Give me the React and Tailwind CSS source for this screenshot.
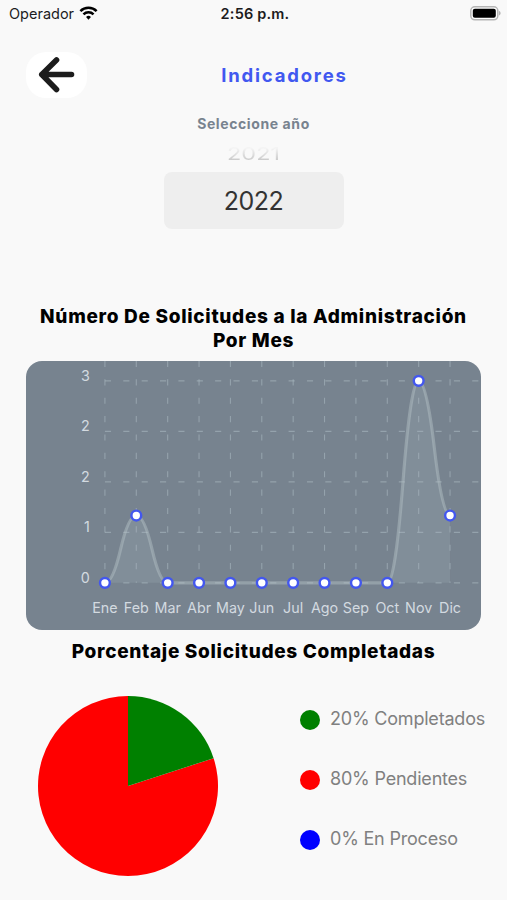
import { useState } from "react";

const months = ["Ene", "Feb", "Mar", "Abr", "May", "Jun", "Jul", "Ago", "Sep", "Oct", "Nov", "Dic"];
const requests = [0, 1, 0, 0, 0, 0, 0, 0, 0, 0, 3, 1];

const statuses = [
  { label: "20% Completados", dot: "bg-[#008000]" },
  { label: "80% Pendientes", dot: "bg-[#ff0000]" },
  { label: "0% En Proceso", dot: "bg-[#0000ff]" },
];

const CHART = { width: 371.5, height: 220, left: 64.4, top: 16.2, bottom: 181.2 };

const getX = (i) => CHART.left + (i * (CHART.width - 64)) / 12;
const getY = (value) => CHART.bottom - (value / 3) * (CHART.bottom - CHART.top);

// Two quadratic curves between every pair of points
const getLinePath = () => {
  let d = `M${getX(0)},${getY(requests[0])}`;
  for (let i = 0; i < requests.length - 1; i++) {
    const x1 = getX(i);
    const x2 = getX(i + 1);
    const y1 = getY(requests[i]);
    const y2 = getY(requests[i + 1]);
    const midX = (x1 + x2) / 2;
    const midY = (y1 + y2) / 2;
    d += ` Q${(midX + x1) / 2},${y1} ${midX},${midY} Q${(midX + x2) / 2},${y2} ${x2},${y2}`;
  }
  return d;
};

const StatusBar = () => (
  <div className="flex h-7 items-center justify-between pl-[9px] pr-[6px] text-[#1c1c1e]">
    <div className="flex flex-1 items-center gap-[5px]">
      <span className="text-[14.5px] leading-7">Operador</span>
      <svg className="-mt-[3px]" width="19" height="14" viewBox="0 0 20 15" fill="none" stroke="#000" strokeWidth="2.7">
        <path d="M1.3 5.6a12.3 12.3 0 0 1 17.4 0" />
        <path d="M4.6 8.9a7.7 7.7 0 0 1 10.8 0" />
        <path d="M10 14.6l-2.6-2.8a3.8 3.8 0 0 1 5.2 0z" fill="#000" stroke="none" />
      </svg>
    </div>
    <span className="text-[14.5px] font-semibold leading-7 tracking-[0.2px]">2:56 p.m.</span>
    <div className="flex flex-1 justify-end">
      <svg className="-mt-[2px]" width="31" height="15" viewBox="0 0 31 15">
        <rect x="0.8" y="0.8" width="27" height="13" rx="4" fill="#fff" stroke="#b5b5b5" strokeWidth="1.5" />
        <rect x="2.8" y="2.8" width="23" height="9" rx="2" fill="#000" />
        <path d="M29 5v4.4c1-.4 1.6-1.200 1.600-2.200S30 5.400 29 5z" fill="#b5b5b5" />
      </svg>
    </div>
  </div>
);

const LineChart = () => {
  const line = getLinePath();

  return (
    <svg className="block h-[269px] w-[455px] rounded-2xl bg-[#77838f]" viewBox="0 0 371.5 219.7">
      {/* Grid */}
      <g stroke="#a9b7c0" strokeOpacity="0.6" strokeDasharray="5 10" strokeWidth="0.9">
        {[0, 1, 2, 3, 4].map((i) => {
          const y = CHART.top + (i * (CHART.bottom - CHART.top)) / 4;
          return <line key={i} x1={CHART.left} x2={CHART.width} y1={y} y2={y} />;
        })}
        {months.map((month, i) => (
          <line key={month} x1={getX(i)} x2={getX(i)} y1="0" y2={CHART.bottom} />
        ))}
      </g>

      {/* Area and line */}
      <path d={`${line} L${getX(11)},${CHART.bottom} L${getX(0)},${CHART.bottom}Z`} fill="#a7b5c0" fillOpacity="0.22" />
      <path d={line} fill="none" stroke="#b5c4c8" strokeOpacity="0.45" strokeWidth="2.6" />
      {requests.map((value, i) => (
        <circle key={i} cx={getX(i)} cy={getY(value)} r="4" fill="#fff" stroke="#4357ee" strokeWidth="2" />
      ))}

      {/* Labels */}
      <g fill="#d3dae0" fontSize="11.7">
        {["3", "2", "2", "1", "0"].map((label, i) => (
          <text key={i} x="52" y={CHART.top + (i * (CHART.bottom - CHART.top)) / 4} textAnchor="end">
            {label}
          </text>
        ))}
        {months.map((month, i) => (
          <text key={month} x={getX(i)} y="205.5" textAnchor="middle">
            {month}
          </text>
        ))}
      </g>
    </svg>
  );
};

const PieChart = () => (
  <svg className="size-[180px]" viewBox="-90 -90 180 180">
    <path d="M0 0L85.600 -27.810A90 90 0 1 1 0 -90Z" fill="#ff0000" />
    <path d="M0 0V-90A90 90 0 0 1 85.600 -27.810Z" fill="#008000" />
  </svg>
);

const App = () => {
  const [year] = useState(2022);

  return (
    <div className="h-[900px] w-[507px] overflow-hidden bg-[#f9f9f9] font-['Inter','Liberation_Sans',sans-serif]">
      <StatusBar />

      <header className="mt-6 grid grid-cols-[87px_1fr_87px] items-center">
        <button className="ml-[26px] flex h-[46px] w-[61px] items-center justify-center rounded-[20px] bg-white pr-[2px]">
          <svg width="38" height="38" viewBox="0 0 38 38" fill="none" stroke="#1c1c1c" strokeWidth="5.6" strokeLinecap="round" strokeLinejoin="round">
            <path d="M34.500 18.500H4.800M19.500 4L4.800 18.500l14.700 15" />
          </svg>
        </button>
        <h1 className="pl-[62px] text-center text-[18.5px] font-bold leading-6 tracking-[1.8px] text-[#4158f0]">Indicadores</h1>
      </header>

      {/* Year picker */}
      <section className="mt-[17px] flex flex-col items-center">
        <p className="text-sm font-bold leading-[18px] tracking-[0.6px] text-[#78838f]">Seleccione año</p>
        <div className="mt-[9px] flex h-[22px] items-end overflow-hidden">
          <span className="origin-bottom scale-y-[0.75] bg-linear-to-b from-[#f4f4f4] from-25% to-[#bdbdbd] bg-clip-text text-[23.5px] leading-7 text-transparent">
            {year - 1}
          </span>
        </div>
        <div className="mt-[8px] flex h-[57px] w-[180px] items-center justify-center rounded-lg bg-[#eeeeee] pt-[3px] text-[25px] tracking-[-0.5px] text-[#333]">
          {year}
        </div>
      </section>

      <section className="mt-[76px] flex flex-col items-center">
        <h2 className="text-center text-[19px] font-extrabold leading-6 tracking-[0.7px] text-black">
          Número De Solicitudes a la Administración
          <br />
          Por Mes
        </h2>
        <div className="mt-[8px]">
          <LineChart />
        </div>
      </section>

      <section className="mt-[10px]">
        <h2 className="text-center text-[19px] font-extrabold leading-6 tracking-[0.68px] text-black">Porcentaje Solicitudes Completadas</h2>
        <div className="mt-8 flex pl-[37.5px]">
          <PieChart />
          <ul className="ml-[82.5px] mt-[8px] flex flex-col gap-9">
            {statuses.map(({ label, dot }) => (
              <li key={label} className="flex h-6 items-center gap-[10px]">
                <span className={`mt-[8px] size-5 rounded-full ${dot}`} />
                <span className="mt-[6px] whitespace-nowrap text-[18px] leading-6 tracking-[-0.2px] text-[#808080]">{label}</span>
              </li>
            ))}
          </ul>
        </div>
      </section>
    </div>
  );
};

export default App;
